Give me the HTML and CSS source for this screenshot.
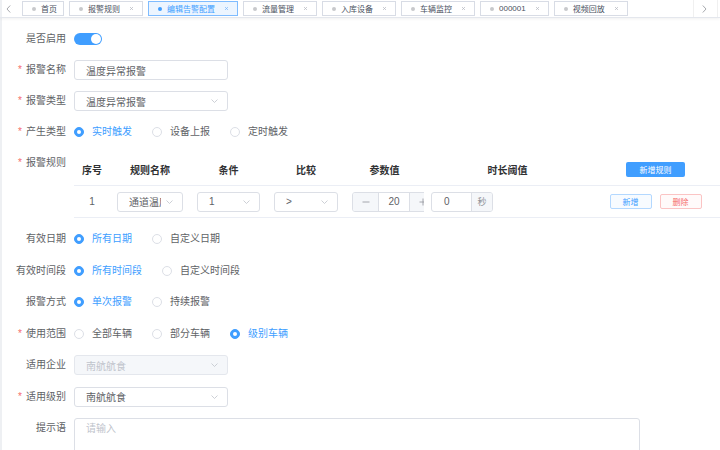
FILE: index.html
```html
<!DOCTYPE html>
<html lang="zh-CN">
<head>
<meta charset="utf-8">
<title>编辑告警配置</title>
<link rel="stylesheet" href="styles.css">
</head>
<body>
<div class="tags-view">
  <span class="scroll-btn left"><svg width="5" height="8" viewBox="0 0 5 8"><path d="M4.2 0.5 L1 4 L4.2 7.5" fill="none" stroke="#909399" stroke-width="0.8"/></svg></span>
  <div class="tags">
    <span class="tag home"><i class="dot"></i>首页</span>
    <span class="tag"><i class="dot"></i>报警规则<svg class="close" viewBox="0 0 5 5"><path d="M1 1 L4 4 M4 1 L1 4" stroke="#b4b8c0" stroke-width="0.7"/></svg></span>
    <span class="tag active"><i class="dot"></i>编辑告警配置<svg class="close" viewBox="0 0 5 5"><path d="M1 1 L4 4 M4 1 L1 4" stroke="#79b8ff" stroke-width="0.7"/></svg></span>
    <span class="tag"><i class="dot"></i>流量管理<svg class="close" viewBox="0 0 5 5"><path d="M1 1 L4 4 M4 1 L1 4" stroke="#b4b8c0" stroke-width="0.7"/></svg></span>
    <span class="tag"><i class="dot"></i>入库设备<svg class="close" viewBox="0 0 5 5"><path d="M1 1 L4 4 M4 1 L1 4" stroke="#b4b8c0" stroke-width="0.7"/></svg></span>
    <span class="tag"><i class="dot"></i>车辆监控<svg class="close" viewBox="0 0 5 5"><path d="M1 1 L4 4 M4 1 L1 4" stroke="#b4b8c0" stroke-width="0.7"/></svg></span>
    <span class="tag"><i class="dot"></i>000001<svg class="close" viewBox="0 0 5 5"><path d="M1 1 L4 4 M4 1 L1 4" stroke="#b4b8c0" stroke-width="0.7"/></svg></span>
    <span class="tag"><i class="dot"></i>视频回放<svg class="close" viewBox="0 0 5 5"><path d="M1 1 L4 4 M4 1 L1 4" stroke="#b4b8c0" stroke-width="0.7"/></svg></span>
  </div>
  <span class="scroll-btn right"><svg width="5" height="8" viewBox="0 0 5 8"><path d="M0.8 0.5 L4 4 L0.8 7.5" fill="none" stroke="#909399" stroke-width="0.8"/></svg></span>
</div>

<div class="form">
  <div class="item">
    <label class="label">是否启用</label>
    <div class="control"><span class="switch"><i class="knob"></i></span></div>
  </div>
  <div class="item">
    <label class="label req">报警名称</label>
    <div class="control"><div class="input">温度异常报警</div></div>
  </div>
  <div class="item">
    <label class="label req">报警类型</label>
    <div class="control"><div class="input select"><span class="val">温度异常报警</span><svg class="chev" viewBox="0 0 7 4"><path d="M0.5 0.5 L3.5 3.5 L6.5 0.5" fill="none" stroke="#c0c4cc" stroke-width="0.8"/></svg></div></div>
  </div>
  <div class="item">
    <label class="label req">产生类型</label>
    <div class="control">
      <span class="radio on"><i class="circle"></i>实时触发</span>
      <span class="radio"><i class="circle"></i>设备上报</span>
      <span class="radio"><i class="circle"></i>定时触发</span>
    </div>
  </div>
  <div class="item table-item">
    <label class="label req">报警规则</label>
    <div class="rules">
      <div class="rules-head">
        <div class="hcell">序号</div>
        <div class="hcell">规则名称</div>
        <div class="hcell">条件</div>
        <div class="hcell">比较</div>
        <div class="hcell">参数值</div>
        <div class="hcell">时长阈值</div>
        <div class="hcell"><span class="btn-primary">新增规则</span></div>
      </div>
      <div class="rules-row">
        <div class="cell center">1</div>
        <div class="cell"><div class="input select sm"><span class="val">通道温度</span><svg class="chev" viewBox="0 0 7 4"><path d="M0.5 0.5 L3.5 3.5 L6.5 0.5" fill="none" stroke="#c0c4cc" stroke-width="0.8"/></svg></div></div>
        <div class="cell"><div class="input select sm"><span class="val">1</span><svg class="chev" viewBox="0 0 7 4"><path d="M0.5 0.5 L3.5 3.5 L6.5 0.5" fill="none" stroke="#c0c4cc" stroke-width="0.8"/></svg></div></div>
        <div class="cell"><div class="input select sm"><span class="val">&gt;</span><svg class="chev" viewBox="0 0 7 4"><path d="M0.5 0.5 L3.5 3.5 L6.5 0.5" fill="none" stroke="#c0c4cc" stroke-width="0.8"/></svg></div></div>
        <div class="cell">
          <div class="num">
            <span class="num-btn minus"><svg width="8" height="8" viewBox="0 0 8 8"><path d="M0.5 4 H7.5" stroke="#909399" stroke-width="0.8"/></svg></span>
            <span class="num-val">20</span>
            <span class="num-btn plus"><svg width="8" height="8" viewBox="0 0 8 8"><path d="M0.5 4 H7.5 M4 0.5 V7.5" stroke="#909399" stroke-width="0.8"/></svg></span>
          </div>
        </div>
        <div class="cell">
          <div class="time"><span class="time-val">0</span><span class="append">秒</span></div>
        </div>
        <div class="cell actions">
          <span class="btn-sm add">新增</span>
          <span class="btn-sm del">删除</span>
        </div>
      </div>
    </div>
  </div>
  <div class="item loose">
    <label class="label">有效日期</label>
    <div class="control">
      <span class="radio on"><i class="circle"></i>所有日期</span>
      <span class="radio"><i class="circle"></i>自定义日期</span>
    </div>
  </div>
  <div class="item loose">
    <label class="label">有效时间段</label>
    <div class="control">
      <span class="radio on"><i class="circle"></i>所有时间段</span>
      <span class="radio"><i class="circle"></i>自定义时间段</span>
    </div>
  </div>
  <div class="item loose">
    <label class="label">报警方式</label>
    <div class="control">
      <span class="radio on"><i class="circle"></i>单次报警</span>
      <span class="radio"><i class="circle"></i>持续报警</span>
    </div>
  </div>
  <div class="item loose">
    <label class="label req">使用范围</label>
    <div class="control">
      <span class="radio"><i class="circle"></i>全部车辆</span>
      <span class="radio"><i class="circle"></i>部分车辆</span>
      <span class="radio on"><i class="circle"></i>级别车辆</span>
    </div>
  </div>
  <div class="item loose">
    <label class="label">适用企业</label>
    <div class="control"><div class="input select disabled"><span class="val">南航航食</span><svg class="chev" viewBox="0 0 7 4"><path d="M0.5 0.5 L3.5 3.5 L6.5 0.5" fill="none" stroke="#c0c4cc" stroke-width="0.8"/></svg></div></div>
  </div>
  <div class="item loose">
    <label class="label req">适用级别</label>
    <div class="control"><div class="input select"><span class="val">南航航食</span><svg class="chev" viewBox="0 0 7 4"><path d="M0.5 0.5 L3.5 3.5 L6.5 0.5" fill="none" stroke="#c0c4cc" stroke-width="0.8"/></svg></div></div>
  </div>
  <div class="item loose">
    <label class="label">提示语</label>
    <div class="control top"><div class="textarea">请输入</div></div>
  </div>
</div>
</body>
</html>
```

FILE: styles.css
```css
* { box-sizing: border-box; }

html, body {
  margin: 0;
  padding: 0;
}

body {
  width: 720px;
  height: 450px;
  overflow: hidden;
  background: #fff;
  font-family: "Liberation Sans", "Noto Sans CJK SC", sans-serif;
  color: #606266;
  box-shadow: inset 2px 0 0 #eef0f3;
}

/* ---------- tags view ---------- */
.tags-view {
  height: 18px;
  display: flex;
  align-items: flex-start;
  border-bottom: 1px solid #e4e7ed;
  box-shadow: 0 1px 3px rgba(0, 0, 0, 0.06);
}

.scroll-btn {
  height: 17px;
  display: flex;
  align-items: center;
  flex: none;
}

.scroll-btn.left {
  width: 16px;
  justify-content: center;
}

.scroll-btn.right {
  width: 25px;
  padding-left: 8px;
  margin-right: 2px;
  border-left: 1px solid #f0f0f0;
  border-right: 1px solid #f0f0f0;
}

.tags {
  flex: 1;
  display: flex;
  gap: 5px;
  padding-left: 6px;
  padding-top: 1px;
  overflow: hidden;
}

.tag {
  flex: none;
  height: 15px;
  display: flex;
  align-items: center;
  border: 1px solid #d8dce5;
  padding: 0 8px 0 9px;
  font-size: 8px;
  color: #495060;
  white-space: nowrap;
  background: #fff;
}

.tag.home { padding-right: 6px; }

.tag .dot {
  width: 4px;
  height: 4px;
  border-radius: 50%;
  background: #c8c9cc;
  margin-right: 5px;
}

.tag .close {
  width: 5px;
  height: 5px;
  margin-left: 9px;
}

.tag.active {
  border-color: #7fbcff;
  background: #ecf5ff;
  color: #409eff;
}

.tag.active .dot { background: #409eff; }

/* ---------- form ---------- */
.form {
  padding-top: 11px;
}

.item {
  display: flex;
  align-items: flex-start;
  margin-bottom: 11px;
}

.item.loose { margin-bottom: 11.5px; }

.label {
  flex: none;
  width: 74px;
  padding-right: 8px;
  text-align: right;
  font-size: 10px;
  line-height: 20px;
  color: #606266;
  white-space: nowrap;
}

.label.req::before {
  content: "*";
  color: #f56c6c;
  margin-right: 4px;
}

.control {
  flex: 1;
  min-height: 20px;
  display: flex;
  align-items: center;
}

.control.top { align-items: flex-start; }

/* switch */
.switch {
  width: 28px;
  height: 12px;
  border-radius: 6px;
  background: #409eff;
  display: flex;
  justify-content: flex-end;
  align-items: center;
  padding: 0 1px;
}

.switch .knob {
  width: 10px;
  height: 10px;
  border-radius: 50%;
  background: #fff;
}

/* inputs */
.input {
  width: 154px;
  height: 20px;
  border: 1px solid #dcdfe6;
  border-radius: 3px;
  padding: 0 11px;
  display: flex;
  align-items: center;
  font-size: 10px;
  color: #606266;
  background: #fff;
  white-space: nowrap;
}

.select {
  padding-right: 9px;
  gap: 5px;
}

.select .val {
  flex: 1;
  overflow: hidden;
  white-space: nowrap;
}

.select .chev {
  flex: none;
  width: 7px;
  height: 4px;
}

.select.sm { width: 100%; }

.select.disabled {
  background: #f5f7fa;
  border-color: #e4e7ed;
  color: #c0c4cc;
}

/* radio */
.radio {
  display: flex;
  align-items: center;
  margin-right: 20px;
  font-size: 10px;
  line-height: 20px;
  color: #606266;
  white-space: nowrap;
}

.radio .circle {
  width: 10px;
  height: 10px;
  border-radius: 50%;
  border: 1px solid #dcdfe6;
  background: #fff;
  margin-right: 8px;
  display: flex;
  align-items: center;
  justify-content: center;
}

.radio.on { color: #409eff; }

.radio.on .circle {
  border-color: #409eff;
  background: #409eff;
}

.radio.on .circle::after {
  content: "";
  width: 4px;
  height: 4px;
  border-radius: 50%;
  background: #fff;
}

/* rules table */
.rules {
  width: 646px;
  flex: none;
}

.rules-head,
.rules-row {
  display: grid;
  grid-template-columns: 36px 80px 77px 78px 79px 167px 129px;
  align-items: center;
  border-bottom: 1px solid #ebeef5;
}

.rules-head {
  height: 33px;
  font-size: 10px;
  font-weight: bold;
  color: #303133;
}

.rules-row {
  height: 32px;
  font-size: 10px;
}

.hcell {
  display: flex;
  justify-content: center;
  align-items: center;
}

.cell {
  padding: 0 7px;
  overflow: hidden;
  display: flex;
  align-items: center;
  height: 100%;
}

.cell.center { justify-content: center; color: #606266; }

.cell.actions {
  justify-content: center;
  gap: 8px;
}

.btn-primary {
  width: 59px;
  height: 15px;
  border-radius: 2px;
  background: #409eff;
  color: #fff;
  font-size: 8px;
  font-weight: normal;
  display: flex;
  align-items: center;
  justify-content: center;
}

.num {
  flex: none;
  width: 84px;
  height: 20px;
  border: 1px solid #dcdfe6;
  border-radius: 3px;
  display: flex;
  overflow: hidden;
}

.num-btn {
  width: 26px;
  flex: none;
  background: #f5f7fa;
  display: flex;
  align-items: center;
  justify-content: center;
}

.num-btn.minus { border-right: 1px solid #dcdfe6; }
.num-btn.plus { border-left: 1px solid #dcdfe6; }

.num-val {
  flex: 1;
  display: flex;
  align-items: center;
  justify-content: center;
  color: #606266;
}

.time {
  flex: none;
  width: 62px;
  height: 20px;
  border: 1px solid #dcdfe6;
  border-radius: 3px;
  display: flex;
  overflow: hidden;
}

.time-val {
  flex: 1;
  padding-left: 12px;
  display: flex;
  align-items: center;
  color: #606266;
}

.append {
  width: 21px;
  flex: none;
  background: #f5f7fa;
  border-left: 1px solid #dcdfe6;
  color: #909399;
  font-size: 9px;
  display: flex;
  align-items: center;
  justify-content: center;
}

.btn-sm {
  width: 42px;
  height: 15px;
  border-radius: 2px;
  font-size: 8px;
  display: flex;
  align-items: center;
  justify-content: center;
}

.btn-sm.add {
  border: 1px solid #b3d8ff;
  color: #409eff;
  background: #f7fbff;
}

.btn-sm.del {
  border: 1px solid #fbc4c4;
  color: #f56c6c;
  background: #fffafa;
}

/* textarea */
.textarea {
  width: 566px;
  height: 60px;
  border: 1px solid #dcdfe6;
  border-radius: 3px;
  padding: 3px 11px;
  font-size: 10px;
  line-height: 14px;
  color: #c0c4cc;
}
```
